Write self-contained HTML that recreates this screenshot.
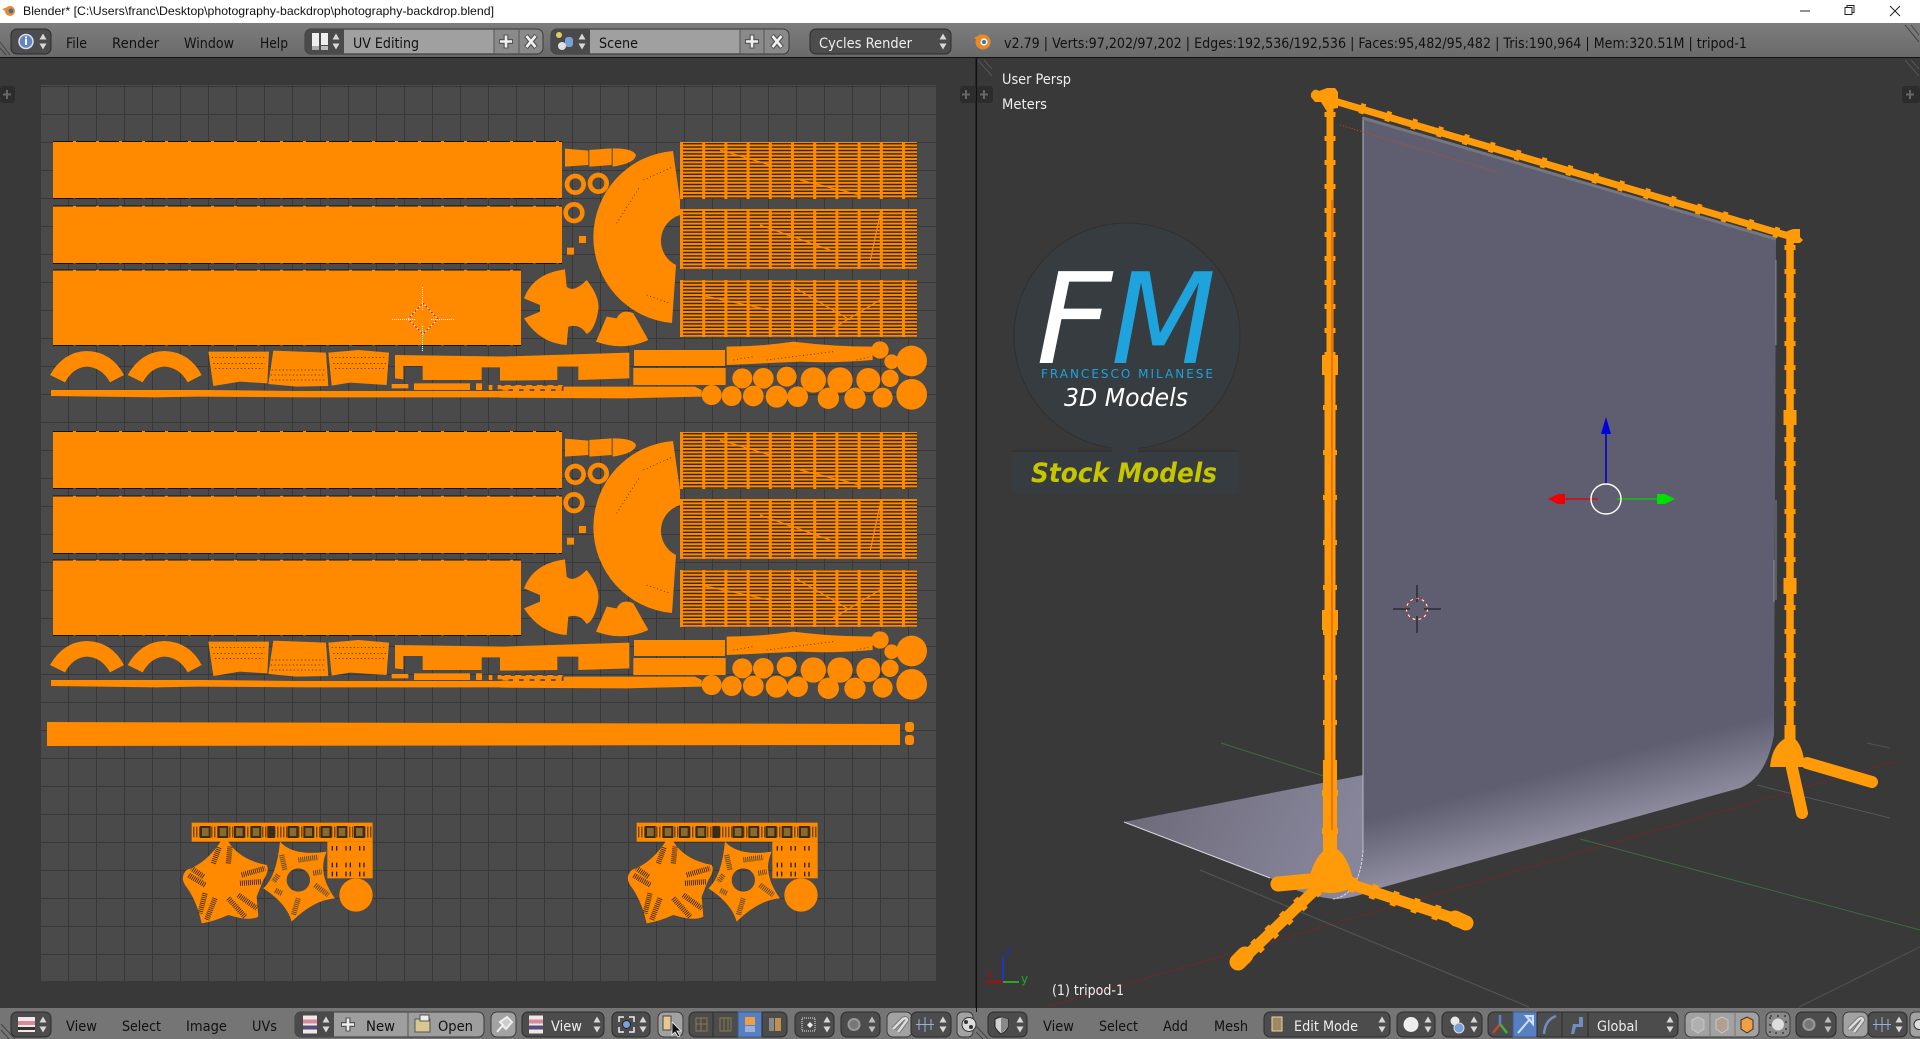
<!DOCTYPE html>
<html><head><meta charset="utf-8"><title>Blender</title>
<style>
html,body{margin:0;padding:0;background:#393939;width:1920px;height:1039px;overflow:hidden}
svg{display:block}
text{font-family:"DejaVu Sans","Liberation Sans",sans-serif;font-size:14px;fill:#111}
.l{fill:#eee}
</style></head><body>
<svg width="1920" height="1039" viewBox="0 0 1920 1039" xmlns="http://www.w3.org/2000/svg">
<defs>
<linearGradient id="hd" x1="0" y1="0" x2="0" y2="1"><stop offset="0" stop-color="#7d7d7d"/><stop offset="1" stop-color="#6a6a6a"/></linearGradient>
<linearGradient id="wall" gradientUnits="userSpaceOnUse" x1="1483" y1="790" x2="1500" y2="855"><stop offset="0" stop-color="#5e5e70"/><stop offset="1" stop-color="#8f8ca0"/></linearGradient>
<linearGradient id="fl" gradientUnits="userSpaceOnUse" x1="1150" y1="800" x2="1330" y2="880"><stop offset="0" stop-color="#6f6d7c"/><stop offset="1" stop-color="#87859a"/></linearGradient>
<pattern id="grid" patternUnits="userSpaceOnUse" x="40" y="86" width="28" height="28"><rect width="28" height="28" fill="#4a4a4a"/><rect width="28" height="1" fill="#383838"/><rect width="1" height="28" fill="#383838"/></pattern>
<pattern id="st" patternUnits="userSpaceOnUse" x="680" y="142" width="22.2" height="3.4"><rect width="22.2" height="3.4" fill="#ff8a00"/><rect y="1" width="22.2" height="1.4" fill="#2e2618"/><rect x="0" width="3" height="3.4" fill="#ff8a00"/></pattern>
<path id="ud" d="M0,-8L3.5,-2H-3.5ZM0,8L3.5,2H-3.5Z" fill="#d8d8d8"/>
<path id="udk" d="M0,-8L3.5,-2H-3.5ZM0,8L3.5,2H-3.5Z" fill="#bdbdbd"/>
<g id="plus"><path d="M0,-7V7M-7,0H7" stroke="#555" stroke-width="5"/><path d="M0,-6V6M-6,0H6" stroke="#f0f0f0" stroke-width="2.6"/></g>
<g id="cross"><path d="M-5,-6L5,6M5,-6L-5,6" stroke="#555" stroke-width="5"/><path d="M-4.500,-5.500L4.500,5.500M4.500,-5.500L-4.500,5.500" stroke="#f0f0f0" stroke-width="2.6"/></g>
<g id="imgic"><rect x="-7" y="-9" width="14" height="18" fill="#f0e8e8"/><rect x="-7" y="-5" width="14" height="4" fill="#d68a9a"/><rect x="-7" y="1" width="14" height="4" fill="#505078"/></g>
<g id="uvg" fill="#ff8a00">
 <rect x="53" y="141" width="509" height="57"/>
 <rect x="53" y="206" width="509" height="57"/>
 <rect x="53" y="270" width="468" height="75"/>
 <path d="M53,141.5H562M53,198.5H562M53,206H562M53,263.5H562M53,270H521M53,345.5H521" stroke="#111" stroke-width="1" stroke-dasharray="20 3" fill="none"/>
 <rect x="680" y="142" width="237" height="57" fill="url(#st)"/>
 <rect x="680" y="209" width="237" height="60" fill="url(#st)"/>
 <rect x="680" y="280" width="237" height="57" fill="url(#st)"/>
 <path d="M720,150L770,165M800,180L860,195M760,225L830,250M880,215L870,262M700,295L770,310M790,285L850,320M880,300L830,330" stroke="#ff8a00" stroke-width="1.2" fill="none"/>
 <path d="M673,151L680,200V215A27,27 0 0 0 676,265L672,323A86.3,86.3 0 0 1 673,151Z"/>
 <g transform="translate(500 130) scale(.33333)">
  <path d="M195,56L265,62V105L195,110ZM268,60L335,55V105L268,110ZM338,55Q400,55 408,75Q405,100 338,110Z"/>
  <path fill-rule="evenodd" d="M194,163a32,32 0 1 0 64,0a32,32 0 1 0 -64,0ZM208,163a18,18 0 1 1 36,0a18,18 0 1 1 -36,0ZM263,160a32,32 0 1 0 64,0a32,32 0 1 0 -64,0ZM277,160a18,18 0 1 1 36,0a18,18 0 1 1 -36,0ZM190,248a32,32 0 1 0 64,0a32,32 0 1 0 -64,0ZM204,248a18,18 0 1 1 36,0a18,18 0 1 1 -36,0Z"/>
  <rect x="237" y="318" width="21" height="21"/><rect x="201" y="353" width="21" height="21"/>
  <path d="M195,418L200,470Q220,490 260,450Q300,500 295,540Q285,600 260,612Q240,580 205,590L200,645Q120,640 72,565L120,545V525L72,505Q100,430 195,418Z"/>
  <path d="M320,560L350,565Q365,535 400,550L445,630Q370,665 288,635Z"/>
  <rect x="402" y="660" width="273" height="48"/><rect x="400" y="714" width="277" height="51"/>
  <path d="M0,680L388,668V745L235,750V710H172V750L0,752Z"/>
  <path d="M0,782L190,770H585L605,780V800L380,805L0,803Z"/>
  <path d="M0,765h188v15h-188Z" stroke="#484848" stroke-width="5" stroke-dasharray="14 18"/>
  <path d="M680,650Q780,650 880,635Q1000,650 1118,650V690Q1000,700 900,695Q790,700 680,705Z"/>
  <circle cx="727" cy="745" r="30"/><circle cx="790" cy="745" r="31"/><circle cx="860" cy="740" r="30"/><circle cx="940" cy="750" r="38"/><circle cx="1020" cy="750" r="38"/><circle cx="1105" cy="750" r="36"/><circle cx="1170" cy="745" r="26"/>
  <circle cx="635" cy="795" r="30"/><circle cx="695" cy="798" r="30"/><circle cx="760" cy="798" r="31"/><circle cx="830" cy="800" r="33"/><circle cx="893" cy="800" r="31"/><circle cx="985" cy="805" r="32"/><circle cx="1065" cy="805" r="32"/><circle cx="1148" cy="803" r="30"/>
  <circle cx="1235" cy="693" r="46"/><circle cx="1235" cy="793" r="46"/><circle cx="1140" cy="660" r="26"/><circle cx="1175" cy="695" r="22"/>
  <path d="M430,150L520,110M350,280L420,170M440,495L510,520M700,690L760,680M800,690L1000,665M1070,690L1110,680" stroke="#3a3020" stroke-width="2.4" stroke-dasharray="3 8" fill="none"/>
 </g>
 <g transform="translate(30 130) scale(.33333)">
  <path d="M60,735Q100,665 170,663Q245,665 282,735L240,757Q215,712 170,710Q130,712 105,757Z"/>
  <path d="M293,735Q333,665 403,663Q478,665 515,735L473,757Q448,712 403,710Q363,712 338,757Z"/>
  <path d="M535,665L717,665L712,760L630,755L550,768Z"/>
  <path d="M730,662L888,668L895,768L800,770L715,762Z"/>
  <path d="M895,668L985,660L1077,668L1070,765L960,758L905,767Z"/>
  <path d="M1095,675L1440,680V750L1415,750V712H1355V750L1178,750V708H1120V748L1095,745Z"/>
  <rect x="1085" y="762" width="50" height="13"/><rect x="1152" y="760" width="168" height="20"/><rect x="1338" y="760" width="18" height="20"/><rect x="1376" y="765" width="11" height="15"/><rect x="1403" y="765" width="11" height="13"/><rect x="1432" y="766" width="8" height="12"/>
  <path d="M63,780H520L800,783H1440V802H830L500,800L380,802L63,798Z"/>
  <path d="M545,682h165M550,700h155M555,716h145M725,720h160M722,735h165M725,750h160M905,682h165M910,700h160M915,716h150" stroke="#3a3020" stroke-width="2.2" stroke-dasharray="4 7" fill="none"/>
 </g>
</g>
<g id="bot">
 <g transform="translate(150 800) scale(.33333)">
  <rect x="125" y="68" width="543" height="57" fill="#ff8a00"/>
  <path d="M130,96H665" stroke="#3a2c16" stroke-width="32" stroke-dasharray="3 6" fill="none"/>
  <g fill="#3a2c16"><rect x="150" y="78" width="32" height="36"/><rect x="203" y="78" width="32" height="36"/><rect x="252" y="78" width="32" height="36"/><rect x="302" y="78" width="32" height="36"/><rect x="352" y="78" width="22" height="36"/><rect x="413" y="78" width="32" height="36"/><rect x="460" y="78" width="32" height="36"/><rect x="512" y="78" width="32" height="36"/><rect x="560" y="78" width="32" height="36"/><rect x="612" y="78" width="32" height="36"/></g>
  <g fill="#8a6a30"><rect x="156" y="84" width="20" height="24"/><rect x="209" y="84" width="20" height="24"/><rect x="258" y="84" width="20" height="24"/><rect x="308" y="84" width="20" height="24"/><rect x="419" y="84" width="20" height="24"/><rect x="466" y="84" width="20" height="24"/><rect x="518" y="84" width="20" height="24"/><rect x="566" y="84" width="20" height="24"/><rect x="618" y="84" width="20" height="24"/></g>
  <path d="M215,120L235,125Q270,180 350,195Q360,210 340,240L320,290L325,350Q300,365 235,345Q190,365 155,370Q140,300 105,255Q90,230 110,210Q170,190 215,120Z" fill="#ff8a00"/>
  <g stroke="#2e2214" stroke-width="16" stroke-dasharray="2.500 3.500" fill="none">
   <path d="M190,190L208,140M235,190L240,140M275,225L345,205M270,250L335,245M265,285L320,325M235,295L285,350M195,295L170,360M165,280L150,340M165,255L115,225M160,230L125,205"/>
  </g>
  <path fill-rule="evenodd" d="M390,125Q430,170 530,155Q500,220 555,295Q490,300 425,365Q410,310 340,265Q380,230 390,125ZM410,240a35,35 0 1 0 70,0a35,35 0 1 0 -70,0Z" fill="#ff8a00"/>
  <g stroke="#5a4a2e" stroke-width="16" stroke-dasharray="3 3" fill="none"><path d="M395,165L405,210M445,180L505,172M490,220L515,215M495,255L535,285M445,295L430,345M395,280L375,270M385,225L370,245"/></g>
  <rect x="532" y="125" width="136" height="110" fill="#ff8a00"/>
  <path d="M545,145h115M545,195h115M545,222h115" stroke="#2e2214" stroke-width="14" stroke-dasharray="4 9 4 24" fill="none"/>
  <circle cx="618" cy="285" r="50" fill="#ff8a00"/>
 </g>
</g>
</defs>

<rect width="1920" height="1039" fill="#393939"/>

<!-- Title bar -->
<rect width="1920" height="23" fill="#fff"/>
<circle cx="10" cy="11" r="5" fill="#ec8a2a"/><circle cx="11" cy="11" r="2.4" fill="#3d6fa8"/><path d="M2,9L8,7V13Z" fill="#ec8a2a"/>
<text x="23" y="15" textLength="471" lengthAdjust="spacingAndGlyphs" style="font-family:'Liberation Sans',sans-serif;font-size:12px">Blender* [C:\Users\franc\Desktop\photography-backdrop\photography-backdrop.blend]</text>
<path d="M1800,11H1810" stroke="#222" stroke-width="1" fill="none"/>
<path d="M1845,7.5h7v7h-7ZM1847,7.5v-2h7v7h-2" stroke="#222" stroke-width="1" fill="none"/>
<path d="M1890,6L1900,16M1900,6L1890,16" stroke="#222" stroke-width="1" fill="none"/>

<!-- Header -->
<rect y="23" width="1920" height="34" fill="url(#hd)"/>
<rect y="57" width="1920" height="1.5" fill="#111"/>
<path d="M0,42L10,55M0,48L6,55M1905,25L1919,42M1911,25L1919,35" stroke="#444" fill="none"/>
<rect x="11" y="29" width="40" height="25" rx="6" fill="#4c4c4c" stroke="#2c2c2c"/>
<circle cx="26" cy="41.5" r="7" fill="#5f86c0" stroke="#dde" stroke-width="1.5"/><rect x="25" y="39" width="2" height="6" fill="#fff"/><rect x="25" y="36.5" width="2" height="1.8" fill="#fff"/>
<use href="#ud" x="43" y="41.5"/>
<text x="66" y="48" textLength="21" lengthAdjust="spacingAndGlyphs">File</text>
<text x="112" y="48" textLength="47" lengthAdjust="spacingAndGlyphs">Render</text>
<text x="184" y="48" textLength="50" lengthAdjust="spacingAndGlyphs">Window</text>
<text x="260" y="48" textLength="28" lengthAdjust="spacingAndGlyphs">Help</text>

<rect x="305" y="29" width="238" height="25" rx="6" fill="#8a8a8a" stroke="#3a3a3a"/>
<path d="M311,29h33v25h-33a6,6 0 0 1 -6,-6v-13a6,6 0 0 1 6,-6Z" fill="#4a4a4a"/>
<rect x="344" y="30" width="150" height="23" fill="#a0a0a0"/>
<rect x="312" y="33" width="7" height="17" fill="#eee"/><rect x="321" y="33" width="7" height="12" fill="#eee"/><rect x="321" y="46" width="7" height="4" fill="#bbb"/><rect x="312" y="46" width="7" height="4" fill="#aaa"/>
<use href="#ud" x="336" y="41.5"/>
<text x="353" y="48" textLength="66" lengthAdjust="spacingAndGlyphs">UV Editing</text>
<path d="M519,29V54M494,29V54" stroke="#555"/>
<use href="#plus" x="506" y="41.5"/><use href="#cross" x="531" y="41.5"/>

<rect x="551" y="29" width="238" height="25" rx="6" fill="#8a8a8a" stroke="#3a3a3a"/>
<path d="M557,29h33v25h-33a6,6 0 0 1 -6,-6v-13a6,6 0 0 1 6,-6Z" fill="#4a4a4a"/>
<rect x="590" y="30" width="150" height="23" fill="#a0a0a0"/>
<circle cx="559" cy="35" r="3" fill="#d8d060"/><rect x="565" y="37" width="8" height="10" rx="3" fill="#7aa0d8"/><circle cx="562" cy="46" r="4" fill="#e0e0e0"/>
<use href="#ud" x="582" y="41.5"/>
<text x="599" y="48" textLength="39" lengthAdjust="spacingAndGlyphs">Scene</text>
<path d="M764,29V54M740,29V54" stroke="#555"/>
<use href="#plus" x="752" y="41.5"/><use href="#cross" x="777" y="41.5"/>

<rect x="810" y="29" width="141" height="25" rx="6" fill="#4c4c4c" stroke="#2c2c2c"/>
<text x="819" y="48" textLength="93" lengthAdjust="spacingAndGlyphs" class="l">Cycles Render</text>
<use href="#ud" x="943" y="41.5"/>

<circle cx="983" cy="42" r="7.5" fill="#e88a2a"/><circle cx="984" cy="42" r="3.6" fill="#f4f4f4"/><circle cx="984" cy="42" r="2" fill="#3d6fa8"/><path d="M974,38L981,34V42Z" fill="#e88a2a"/>
<text x="1004" y="48" textLength="743" lengthAdjust="spacingAndGlyphs">v2.79 | Verts:97,202/97,202 | Edges:192,536/192,536 | Faces:95,482/95,482 | Tris:190,964 | Mem:320.51M | tripod-1</text>

<!-- Left UV editor -->
<rect y="58" width="976" height="950" fill="#393939"/>
<rect x="40" y="85" width="897" height="896" fill="url(#grid)"/>
<use href="#uvg"/>
<use href="#uvg" transform="translate(0 290)"/>
<g fill="#ff8a00">
 <path d="M47,722L900,724V745L47,746Z"/>
 <rect x="905" y="722" width="9" height="10" rx="3"/><rect x="905" y="735" width="9" height="10" rx="3"/>
</g>
<use href="#bot"/>
<use href="#bot" transform="translate(445 0)"/>
<!-- UV cursor -->
<g fill="none">
 <path d="M408,319L423,303L438,319L423,334Z" stroke="#fff" stroke-dasharray="2 2"/>
 <path d="M408,319L423,303L438,319L423,334Z" stroke="#e01010" stroke-dasharray="2 2" stroke-dashoffset="2"/>
 <path d="M392,319.5H415M431,319.5H455M422.500,287V310M422.500,326V351" stroke="#fff" stroke-dasharray="1 1"/>
</g>

<!-- Right 3D view -->
<rect x="976" y="58" width="944" height="950" fill="#393939"/>
<rect x="975.5" y="57" width="1.6" height="951" fill="#111"/>
<path d="M978,60L992,76M984,60L992,69M1905,60L1919,76M1911,60L1919,69" stroke="#555" fill="none"/>
<!-- tabs -->
<rect x="0" y="86" width="15" height="17" rx="3" fill="#2c2c2c"/><path d="M7,90V99M3,94.5H11" stroke="#666" stroke-width="2"/>
<rect x="960" y="86" width="16" height="17" rx="3" fill="#2c2c2c"/><path d="M966,90V99M962,94.5H970" stroke="#666" stroke-width="2"/>
<rect x="977" y="86" width="16" height="17" rx="3" fill="#2c2c2c"/><path d="M984,90V99M980,94.5H988" stroke="#666" stroke-width="2"/>
<rect x="1902" y="86" width="18" height="17" rx="3" fill="#2c2c2c"/><path d="M1910,90V99M1906,94.5H1914" stroke="#666" stroke-width="2"/>
<!-- ground lines -->
<g fill="none" stroke-width="1">
 <path d="M1046,1007L1900,760" stroke="#6a2a2a"/>
 <path d="M1221,743L1330,778M1580,839L1920,930" stroke="#3f6a3f"/>
 <path d="M1200,870L1529,1007M1757,785L1890,818" stroke="#525858"/>
 <path d="M1799,1007L1920,947M1867,743L1890,748" stroke="#525252"/>
</g>
<!-- floor + wall -->
<path d="M1124,822L1363,775V850Q1360,895 1333,899Q1300,895 1270,878Z" fill="url(#fl)"/>
<path d="M1363,117L1776,238L1774,735Q1766,778 1740,788L1380,888Q1350,900 1333,899Q1358,895 1363,850Z" fill="url(#wall)"/>
<path d="M1363,117V850" stroke="#b8b8c4" fill="none"/>
<path d="M1363,850Q1360,895 1333,899" stroke="#d8d8e0" stroke-dasharray="3 1" fill="none"/>
<path d="M1124,822L1270,878" stroke="#d8d8e0" fill="none"/>
<path d="M1776,260V345M1776,500V600M1774,560V602" stroke="#b8b8c4" stroke-width="1" fill="none" opacity=".6"/>
<path d="M1363,118L1776,239" stroke="#76767f" stroke-width="3" fill="none"/>
<!-- rig -->
<g fill="none" stroke="#ff9a08" stroke-linecap="butt">
 <path d="M1330,100V360" stroke-width="7"/>
 <path d="M1330,360V760" stroke-width="11"/>
 <path d="M1330,760V860" stroke-width="14"/>
 <path d="M1330,112V360" stroke-width="11" stroke-dasharray="5 19"/>
 <path d="M1330,360V770" stroke-width="14" stroke-dasharray="5 40"/>
 <path d="M1330,355V375M1330,610V630" stroke-width="16"/>
 <path d="M1330,790V796M1330,828V834" stroke-width="16"/>
 <path d="M1321,97L1792,237" stroke-width="7"/>
 <path d="M1360,108L1792,237" stroke-width="10.500" stroke-dasharray="5 22"/>
 <path d="M1790,235V745" stroke-width="7.500"/>
 <path d="M1790,245V745" stroke-width="11" stroke-dasharray="5 19"/>
 <path d="M1790,410V425M1790,578V594" stroke-width="13"/>
 <path d="M1790,725V740" stroke-width="11"/>
 <path d="M1807,763L1872,782" stroke-width="12" stroke-linecap="round"/>
 <path d="M1792,768L1802,813" stroke-width="12" stroke-linecap="round"/>
 <path d="M1350,884L1465,922" stroke-width="11"/>
 <path d="M1350,884L1465,922" stroke-width="15" stroke-dasharray="6 16"/>
 <path d="M1455,918L1466,923" stroke-width="15" stroke-linecap="round"/>
 <path d="M1317,888L1240,962" stroke-width="11"/>
 <path d="M1317,888L1245,958" stroke-width="15" stroke-dasharray="6 14"/>
 <path d="M1245,955L1238,962" stroke-width="17" stroke-linecap="round"/>
 <path d="M1310,881L1278,884" stroke-width="15" stroke-linecap="round"/>
</g>
<g fill="#ff9a08">
 <path d="M1332,847Q1345,850 1352,875Q1354,885 1347,890Q1330,896 1315,890Q1308,885 1311,872Q1318,850 1332,847Z"/>
 <path d="M1311,97a5,6 0 0 1 8,-6l8,-3h8l3,4v16l-12,2l-5,-8h-6Z"/>
 <path d="M1785,232l8,-3h7v8l3,3l-3,3h-13Z"/>
 <path d="M1770,767Q1772,745 1786,738H1794Q1803,745 1805,767Z"/>
</g>
<path d="M1332,200V830" stroke="#d84a10" stroke-width="1" fill="none"/>
<path d="M1340,125L1500,173" stroke="#d84a10" stroke-width="1" stroke-dasharray="1 2" fill="none"/>
<!-- logo -->
<circle cx="1127" cy="336" r="113" fill="#363c3f" stroke="#303030"/>
<rect x="1112" y="446" width="26" height="8" fill="#363c3f"/>
<rect x="1012" y="451" width="227" height="43" fill="#363c3f"/>
<path d="M1012,451H1112M1138,451H1239" stroke="#2c2c2c" fill="none"/>
<text x="1036" y="363" style="font-size:126px;font-style:oblique;fill:#fff" textLength="76" lengthAdjust="spacingAndGlyphs">F</text>
<text x="1111" y="363" style="font-size:126px;font-style:oblique;fill:#1fa3dc" textLength="105" lengthAdjust="spacingAndGlyphs">M</text>
<text x="1041" y="378" style="font-size:12px;fill:#1fa3dc" textLength="172" lengthAdjust="spacing">FRANCESCO MILANESE</text>
<text x="1064" y="406" style="font-size:25px;font-style:oblique;fill:#fff" textLength="124" lengthAdjust="spacingAndGlyphs">3D Models</text>
<text x="1031" y="482" style="font-size:27px;font-style:oblique;font-weight:bold;fill:#c6c600" textLength="186" lengthAdjust="spacingAndGlyphs">Stock Models</text>
<!-- overlay text -->
<text x="1002" y="84" textLength="69" lengthAdjust="spacingAndGlyphs" class="l">User Persp</text>
<text x="1002" y="109" textLength="45" lengthAdjust="spacingAndGlyphs" class="l">Meters</text>
<text x="1052" y="995" textLength="72" lengthAdjust="spacingAndGlyphs" class="l">(1) tripod-1</text>
<!-- mini axis -->
<path d="M1003,982V957" stroke="#2233cc" stroke-width="2" fill="none"/>
<path d="M1003,982H1019" stroke="#22aa22" stroke-width="2" fill="none"/>
<path d="M1003,982H986" stroke="#8a1a1a" stroke-width="3" fill="none"/>
<text x="1005" y="955" style="fill:#2233aa;font-size:12px">z</text>
<text x="1021" y="983" style="fill:#22aa22;font-size:12px">y</text>
<text x="986" y="978" style="fill:#8a1a1a;font-size:12px">x</text>
<!-- cursor -->
<g fill="none">
 <circle cx="1417" cy="609" r="10.5" stroke="#fff" stroke-dasharray="3 3"/>
 <circle cx="1417" cy="609" r="10.5" stroke="#e02020" stroke-dasharray="3 3" stroke-dashoffset="3"/>
 <path d="M1393,609H1410M1424,609H1441M1417,585V602M1417,616V633" stroke="#111"/>
</g>
<!-- manipulator -->
<path d="M1606,484V432" stroke="#0000c8" stroke-width="1.6" fill="none"/>
<path d="M1606,417L1611,434H1601Z" fill="#0000e0"/>
<path d="M1598,499H1560" stroke="#c81010" stroke-width="1.6" fill="none"/>
<path d="M1548,499L1558,494H1565V504H1558Z" fill="#f00000"/>
<path d="M1617,499H1660" stroke="#10c010" stroke-width="1.6" fill="none"/>
<path d="M1675,499L1665,494H1657V504H1665Z" fill="#00e000"/>
<circle cx="1606" cy="499" r="15" fill="none" stroke="#fff" stroke-width="1.4"/>

<!-- Footer -->
<rect y="1008" width="1920" height="31" fill="#757575"/>
<path d="M1,1024L15,1039M1,1030L9,1039" stroke="#444" fill="none"/>
<!-- left footer -->
<rect x="11" y="1012" width="40" height="25" rx="6" fill="#4c4c4c" stroke="#2c2c2c"/>
<rect x="18" y="1017" width="17" height="15" fill="#f0e8e8"/><rect x="18" y="1021" width="17" height="4" fill="#d68a9a"/><rect x="18" y="1027" width="17" height="3" fill="#333"/>
<use href="#ud" x="43" y="1024.5"/>
<text x="66" y="1031" textLength="31" lengthAdjust="spacingAndGlyphs">View</text>
<text x="122" y="1031" textLength="39" lengthAdjust="spacingAndGlyphs">Select</text>
<text x="186" y="1031" textLength="41" lengthAdjust="spacingAndGlyphs">Image</text>
<text x="252" y="1031" textLength="25" lengthAdjust="spacingAndGlyphs">UVs</text>

<rect x="295" y="1012" width="189" height="25" rx="6" fill="#9e9e9e" stroke="#3a3a3a"/>
<path d="M301,1012h33v25h-33a6,6 0 0 1 -6,-6v-13a6,6 0 0 1 6,-6Z" fill="#4a4a4a"/>
<use href="#imgic" x="310" y="1024.5"/><use href="#ud" x="326" y="1024.5"/>
<path d="M408,1012V1037" stroke="#555"/>
<use href="#plus" x="348" y="1024.5"/>
<text x="366" y="1031" textLength="29" lengthAdjust="spacingAndGlyphs">New</text>
<rect x="415" y="1019" width="15" height="13" fill="#d8c890" stroke="#555"/><rect x="420" y="1015" width="9" height="6" fill="#eee" stroke="#555"/>
<text x="438" y="1031" textLength="35" lengthAdjust="spacingAndGlyphs">Open</text>

<rect x="491" y="1012" width="25" height="25" rx="6" fill="#a2a2a2" stroke="#3a3a3a"/>
<path d="M497,1032L503,1025L500,1022L507,1017L512,1022L506,1029L503,1026" stroke="#eee" stroke-width="2" fill="#ccc"/>

<rect x="522" y="1012" width="82" height="25" rx="6" fill="#4c4c4c" stroke="#2c2c2c"/>
<use href="#imgic" x="536" y="1024.5"/>
<text x="551" y="1031" textLength="31" lengthAdjust="spacingAndGlyphs" class="l">View</text>
<use href="#ud" x="597" y="1024.5"/>

<rect x="612" y="1012" width="38" height="25" rx="6" fill="#4c4c4c" stroke="#2c2c2c"/>
<path d="M619,1022V1017H624M629,1017H634V1022M634,1027V1032H629M624,1032H619V1027" stroke="#eee" stroke-width="1.5" fill="none"/>
<circle cx="626.500" cy="1024.500" r="4" fill="#7aa0d8" stroke="#222"/>
<use href="#ud" x="643" y="1024.5"/>

<rect x="658" y="1012" width="25" height="25" rx="6" fill="#a2a2a2" stroke="#3a3a3a"/>
<rect x="663" y="1016" width="8" height="14" fill="#e8c890" stroke="#444"/>
<path d="M672,1022V1035L675,1032L678,1037L680,1036L677,1031H681Z" fill="#111" stroke="#eee" stroke-width=".8"/>

<rect x="689" y="1012" width="98" height="25" rx="6" fill="#4c4c4c" stroke="#2c2c2c"/>
<rect x="738" y="1012" width="24" height="25" fill="#5680c2" stroke="#3a5a90"/>
<path d="M713,1012V1037M762,1012V1037" stroke="#2c2c2c"/>
<rect x="696" y="1018" width="11" height="13" fill="none" stroke="#8a7a50"/><path d="M701,1018V1031M696,1024H707" stroke="#8a7a50"/>
<rect x="720" y="1018" width="11" height="13" fill="none" stroke="#8a7a50"/><path d="M724,1018V1031M728,1018V1031" stroke="#8a7a50"/>
<rect x="745" y="1017" width="10" height="8" fill="#f0a040"/><rect x="745" y="1026" width="10" height="6" fill="#9ab0d8"/>
<rect x="769" y="1018" width="5" height="13" fill="#8a8a8a"/><rect x="775" y="1018" width="6" height="13" fill="#c09050"/>

<rect x="795" y="1012" width="39" height="25" rx="6" fill="#4c4c4c" stroke="#2c2c2c"/>
<rect x="802" y="1018" width="13" height="13" fill="none" stroke="#eee" stroke-dasharray="1 1"/><path d="M810,1022l3,3l-3,3l-3,-3Z" fill="#eee"/>
<use href="#ud" x="827" y="1024.5"/>

<rect x="841" y="1012" width="39" height="25" rx="6" fill="#4c4c4c" stroke="#2c2c2c"/>
<circle cx="854" cy="1024.5" r="5.5" fill="#777" stroke="#999" stroke-width="2"/>
<use href="#udk" x="872" y="1024.5"/>

<rect x="887" y="1012" width="25" height="25" rx="6" fill="#a2a2a2" stroke="#3a3a3a"/>
<path d="M893,1029L903,1019Q906,1017 907,1020L898,1032" fill="none" stroke="#777" stroke-width="4.500"/>
<path d="M893,1029L903,1019Q906,1017 907,1020L898,1032" fill="none" stroke="#ddd" stroke-width="2.500"/>
<rect x="911" y="1012" width="40" height="25" rx="6" fill="#4c4c4c" stroke="#2c2c2c"/>
<path d="M916,1024.500H934M919,1019V1030M925,1017V1032M931,1019V1030" stroke="#9ab0d8"/>
<use href="#ud" x="943" y="1024.5"/>
<rect x="957" y="1012" width="16" height="25" rx="5" fill="#a2a2a2" stroke="#3a3a3a"/>
<circle cx="969" cy="1024.5" r="7" fill="#ddd" stroke="#333"/><circle cx="966" cy="1022" r="2" fill="#333"/><circle cx="971" cy="1027" r="2" fill="#333"/>

<!-- right footer -->
<rect x="976" y="1008" width="1" height="4" fill="#111"/>
<path d="M976,1026L988,1039M976,1032L983,1039" stroke="#444" fill="none"/>
<rect x="988" y="1012" width="39" height="25" rx="6" fill="#4c4c4c" stroke="#2c2c2c"/>
<path d="M1000,1017L1008,1019V1027Q1006,1032 1001,1034Q997,1031 995,1027V1019Z" fill="#d0d0d0" stroke="#222"/><path d="M1001,1017V1034L1008,1027V1019Z" fill="#888"/>
<use href="#ud" x="1020" y="1024.5"/>
<text x="1043" y="1031" textLength="31" lengthAdjust="spacingAndGlyphs">View</text>
<text x="1099" y="1031" textLength="39" lengthAdjust="spacingAndGlyphs">Select</text>
<text x="1163" y="1031" textLength="25" lengthAdjust="spacingAndGlyphs">Add</text>
<text x="1214" y="1031" textLength="34" lengthAdjust="spacingAndGlyphs">Mesh</text>

<rect x="1264" y="1012" width="126" height="25" rx="6" fill="#4c4c4c" stroke="#2c2c2c"/>
<rect x="1272" y="1017" width="10" height="14" fill="#a08860" stroke="#e8d8b0"/>
<text x="1294" y="1031" textLength="64" lengthAdjust="spacingAndGlyphs" class="l">Edit Mode</text>
<use href="#ud" x="1382" y="1024.5"/>

<rect x="1397" y="1012" width="38" height="25" rx="6" fill="#4c4c4c" stroke="#2c2c2c"/>
<circle cx="1411" cy="1024.5" r="7.5" fill="#eee"/>
<use href="#ud" x="1428" y="1024.5"/>

<rect x="1442" y="1012" width="40" height="25" rx="6" fill="#4c4c4c" stroke="#2c2c2c"/>
<circle cx="1455" cy="1021" r="4.500" fill="#e8e8e8"/><circle cx="1459" cy="1028" r="5" fill="#7aa0d8" stroke="#ddd"/>
<use href="#ud" x="1474" y="1024.5"/>

<rect x="1488" y="1012" width="190" height="25" rx="6" fill="#4c4c4c" stroke="#2c2c2c"/>
<rect x="1513" y="1012" width="24" height="25" fill="#5680c2" stroke="#3a5a90"/>
<path d="M1537,1012V1037M1562,1012V1037M1588,1012V1037" stroke="#2c2c2c"/>
<path d="M1500,1024V1015" stroke="#5a80d0" stroke-width="2.5" fill="none"/><path d="M1500,1024L1493,1033" stroke="#d04030" stroke-width="2.500" fill="none"/><path d="M1500,1024L1507,1033" stroke="#40b040" stroke-width="2.500" fill="none"/>
<path d="M1518,1033L1530,1019M1526,1016H1533V1024Z" stroke="#cfe0ff" stroke-width="2" fill="#7aa8e8"/>
<path d="M1544,1034Q1545,1020 1556,1016" stroke="#6f8fc0" stroke-width="2.500" fill="none"/>
<path d="M1571,1034L1573,1024H1579V1017H1583V1027H1576L1574,1034Z" fill="#6f8fc0"/>
<text x="1597" y="1031" textLength="41" lengthAdjust="spacingAndGlyphs" class="l">Global</text>
<use href="#ud" x="1670" y="1024.5"/>

<rect x="1685" y="1012" width="74" height="25" rx="6" fill="#a2a2a2" stroke="#3a3a3a"/>
<path d="M1710,1012V1037M1735,1012V1037" stroke="#777"/>
<path d="M1692,1020L1698,1017L1704,1020V1029L1698,1033L1692,1029Z" fill="#b0b0b0" stroke="#c8c8c8"/>
<path d="M1716,1020L1722,1017L1728,1020V1029L1722,1033L1716,1029Z" fill="#b0a090" stroke="#c8c8c8"/>
<path d="M1741,1020L1747,1017L1753,1020V1029L1747,1033L1741,1029Z" fill="#f0a040" stroke="#333"/>

<rect x="1766" y="1012" width="24" height="25" rx="6" fill="#8a8a8a" stroke="#3a3a3a"/>
<circle cx="1778" cy="1024.5" r="6" fill="#ddd"/><rect x="1770" y="1016" width="16" height="17" fill="none" stroke="#111" stroke-dasharray="2 5"/>
<rect x="1796" y="1012" width="40" height="25" rx="6" fill="#4c4c4c" stroke="#2c2c2c"/>
<circle cx="1809" cy="1024.5" r="5.500" fill="#777" stroke="#999" stroke-width="2"/>
<use href="#udk" x="1828" y="1024.5"/>
<rect x="1843" y="1012" width="25" height="25" rx="6" fill="#a2a2a2" stroke="#3a3a3a"/>
<path d="M1849,1029L1859,1019Q1862,1017 1863,1020L1854,1032" fill="none" stroke="#777" stroke-width="4.500"/>
<path d="M1849,1029L1859,1019Q1862,1017 1863,1020L1854,1032" fill="none" stroke="#ddd" stroke-width="2.500"/>
<rect x="1868" y="1012" width="39" height="25" rx="6" fill="#4c4c4c" stroke="#2c2c2c"/>
<path d="M1873,1024.500H1891M1876,1019V1030M1882,1017V1032M1888,1019V1030" stroke="#9ab0d8"/>
<use href="#ud" x="1899" y="1024.5"/>
<rect x="1910" y="1012" width="14" height="25" rx="5" fill="#a2a2a2" stroke="#3a3a3a"/>
<circle cx="1919" cy="1024.500" r="5" fill="#ddd" stroke="#333"/>
</svg>
</body></html>
